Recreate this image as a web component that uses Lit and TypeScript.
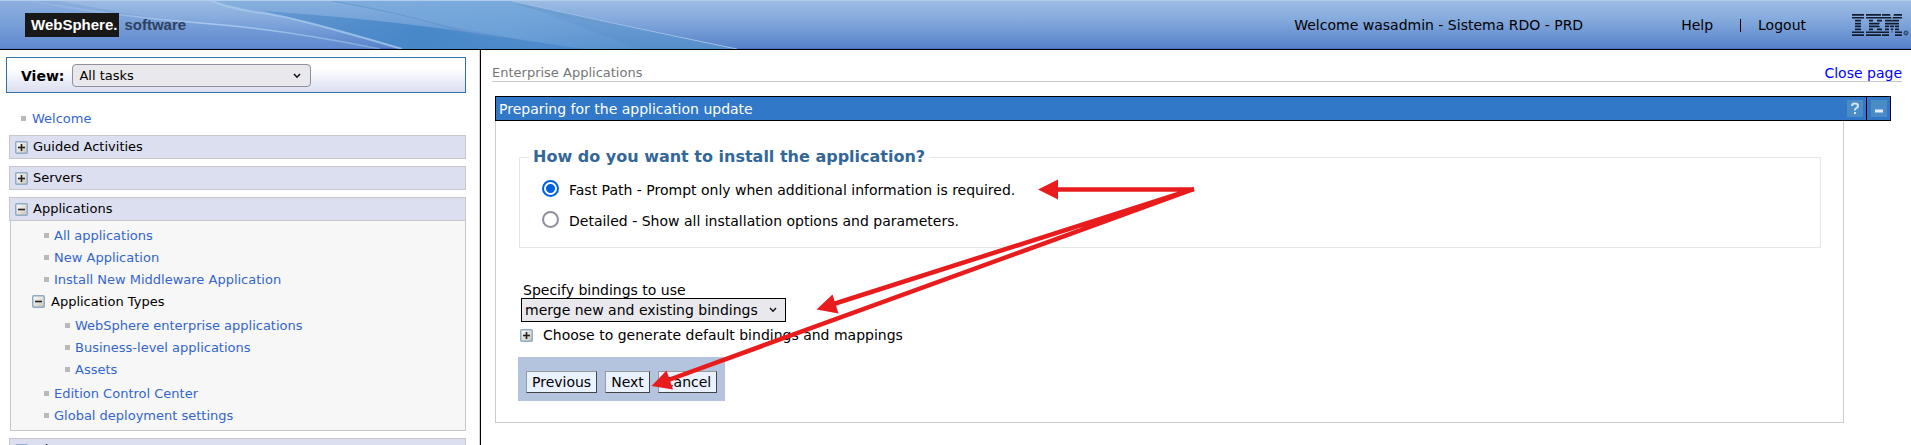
import { LitElement, html, css, svg } from "lit";
import { customElement, property } from "lit/decorators.js";

@customElement("toggle-icon")
class ToggleIcon extends LitElement {
  @property({ type: Boolean }) open = false;
  static styles = css`
    :host { display: block; width: 13px; height: 13px; flex: none; }
    .icon { display: block; }
  `;
  render() {
    return html`<svg class="icon" width="13" height="13" viewBox="0 0 13 13" aria-hidden="true">
      <defs><linearGradient id="face" x1="0" y1="0" x2="1" y2="1">
        <stop offset="0" stop-color="#fff" /><stop offset="1" stop-color="#c9c3b6" />
      </linearGradient></defs>
      <rect x="0.75" y="0.75" width="11.5" height="11.5" rx="1" fill="url(#face)" stroke="#8fadc6" stroke-width="1.5" />
      <path d="M3 6.5H10" stroke="#222" stroke-width="1.6" />
      ${this.open ? null : svg`<path d="M6.5 3V10" stroke="#222" stroke-width="1.6" />`}
    </svg>`;
  }
}

@customElement("app-banner")
class AppBanner extends LitElement {
  static styles = css`
    :host {
      display: flex; align-items: center; position: relative; overflow: hidden;
      box-sizing: border-box; height: 50px; padding: 0 2px 0 25px;
      border-top: 1px solid #b4cdea; border-bottom: 1px solid #000;
      background: linear-gradient(#9cbbe3, #83a9dc 40%, #5983cb 97%, #3a68bf);
      font-size: 14px; color: #000;
    }
    .art { position: absolute; left: 0; top: 0; }
    .brand { display: flex; align-items: center; position: relative; gap: 5px;
      font-family: "Liberation Sans Narrow", "Liberation Sans", sans-serif;
      font-size: 15px; font-weight: bold; line-height: 24px; color: #2e4260; }
    .mark { background: #181818; color: #fff; padding: 0 2px 0 6px; }
    .tools { display: flex; align-items: center; margin-left: auto; position: relative; }
    .user { margin-right: 98px; }
    .tools a { color: #000; text-decoration: none; }
    .bar { width: 1px; height: 13px; background: #000; margin: 0 17px 0 27px; }
    .ibm { margin-left: 46px; display: block; }
  `;
  render() {
    return html`
      <svg class="art" width="742" height="48" viewBox="0 0 742 48" aria-hidden="true">
        <defs>
          <linearGradient id="a" x1="0" y1="0" x2="0" y2="1"><stop offset="0" stop-color="#7fabdc" /><stop offset="1" stop-color="#5590cd" /></linearGradient>
          <linearGradient id="b" x1="0" y1="0" x2="1" y2="0"><stop offset="0" stop-color="#4a86c8" stop-opacity=".5" /><stop offset=".5" stop-color="#4486c7" /><stop offset="1" stop-color="#4b8acb" stop-opacity=".6" /></linearGradient>
          <linearGradient id="c" x1="0" y1="0" x2="1" y2="0"><stop offset="0" stop-color="#a9c8ee" stop-opacity=".2" /><stop offset=".5" stop-color="#a9c8ee" /><stop offset="1" stop-color="#a9c8ee" stop-opacity=".5" /></linearGradient>
          <linearGradient id="d" x1="0" y1="0" x2="1" y2="0"><stop offset="0" stop-color="#79aadb" /><stop offset=".6" stop-color="#6ea6da" /><stop offset="1" stop-color="#5f9ad3" stop-opacity=".5" /></linearGradient>
        </defs>
        <path d="M0 0H60Q150 18 200 22Q300 32 380 48H0Z" fill="#6f97d8" opacity=".35" />
        <path d="M213 0H512L737 48H402Q330 28 262 12Z" fill="url(#a)" opacity=".7" />
        <path d="M262 10Q380 18 480 33L585 48H402Q340 28 262 10Z" fill="url(#b)" opacity=".9" />
        <path d="M332 0H512L640 48H585Q500 36 460 27Q400 14 332 0Z" fill="url(#d)" opacity=".6" />
        <path d="M512 0L640 48H737Z" fill="#5792cc" opacity=".35" />
        <path d="M30 0Q120 16 200 22T380 48" fill="none" stroke="url(#c)" stroke-width="1.5" />
        <path d="M212 0Q230 8 262 12T402 48" fill="none" stroke="#a5c9eb" stroke-width="2" opacity=".8" />
        <path d="M332 0Q400 12 440 24T500 36" fill="none" stroke="#5a8fc4" opacity=".6" />
        <path d="M512 0Q620 24 737 48" fill="none" stroke="#9fc0e6" />
        <path d="M516 3Q560 14 620 26" fill="none" stroke="#6b94c4" opacity=".6" />
      </svg>
      <div class="brand"><span class="mark">WebSphere.</span><span>software</span></div>
      <div class="tools">
        <span class="user">Welcome wasadmin - Sistema RDO - PRD</span>
        <a href="#help">Help</a><span class="bar"></span><a href="#logout">Logout</a>
        <svg class="ibm" width="57" height="22" viewBox="0 0 57 22" role="img" aria-label="IBM">
          <g fill="#121c2e">
            <path d="M0 0h12v1.7H0zM14 0h15v1.7H14zM30 0h8l.6 1.7H30zM42 0h8v1.7H41.4z" />
            <path d="M0 2.9h12v1.7H0zM14 2.9h17v1.7H14zM30 2.9h9l.6 1.7H30zM41 2.9h9v1.7H40.4z" />
            <path d="M3 5.8h6v1.7H3zM17 5.8h4v1.7h-4zM25 5.8h5v1.7h-5zM33 5.8h6.6l.6 1.7H33zM40.4 5.8H47v1.7h-7.2z" />
            <path d="M3 8.7h6v1.7H3zM17 8.7h11l-1 1.7H17zM33 8.7h14v1.7H33z" />
            <path d="M3 11.6h6v1.7H3zM17 11.6h10l1 1.7H17zM33 11.6h4v1.7h-4zM37.5 11.6h5l-.6 1.7h-3.8zM43 11.6h4v1.7h-4z" />
            <path d="M3 14.5h6v1.7H3zM17 14.5h4v1.7h-4zM25 14.5h5v1.7h-5zM33 14.5h4v1.7h-4zM38.5 14.5h3l-.6 1.7h-1.8zM43 14.5h4v1.7h-4z" />
            <path d="M0 17.4h12v1.7H0zM14 17.4h16v1.7H14zM30 17.4h7v1.7h-7zM39.4 17.4h1.2L40 19zM43 17.4h7v1.7h-7z" />
            <path d="M0 20.2h12v1.7H0zM14 20.2h15v1.7H14zM30 20.2h7v1.7h-7zM43 20.2h7v1.7h-7z" />
          </g>
          <circle cx="54" cy="19" r="2" fill="none" stroke="#20324f" /><circle cx="54" cy="19" r=".7" fill="#20324f" />
        </svg>
      </div>`;
  }
}

@customElement("task-nav")
class TaskNav extends LitElement {
  static styles = css`
    :host { display: block; padding: 7px 13px 0 6px; font-size: 13px; color: #000; }
    .view { display: flex; align-items: center; gap: 8px; height: 33px; padding: 1px 0 0 14px; margin-bottom: 14px;
      border: 1px solid #336fa8; background: linear-gradient(#fff 30%, #dadff0); }
    .view label { font-size: 14px; font-weight: bold; }
    .pick { display: grid; width: 239px; align-items: center; }
    .pick > * { grid-area: 1 / 1; }
    .pick select { appearance: none; height: 23px; padding: 0 6px; border: 1px solid #8f8f9d; border-radius: 4px;
      background: #e9e9ed; color: #000; font: inherit; }
    .arrow { justify-self: end; margin-right: 10px; pointer-events: none; }
    .nav { padding-left: 3px; }
    .link { display: flex; align-items: center; gap: 5px; height: 22px; padding-left: 33px; }
    .link::before { content: ""; width: 5px; height: 5px; background: #b9b9b9; }
    .link a { color: #36c; text-decoration: none; }
    .top { padding: 0 0 6px 12px; gap: 6px; }
    .group { display: flex; align-items: center; gap: 5px; height: 22px; padding-left: 5px; margin-bottom: 7px;
      border: 1px solid #c6c6cc; background: #dcdff0; }
    .group span { padding-bottom: 1px; }
    .group.open { margin-bottom: 0; }
    .panel { margin: 0 0 7px 1px; padding: 3px 0 4px; border: 1px solid #c6c6c6; border-top: 0; background: #f7f7f7; }
    .sub { display: flex; align-items: center; gap: 6px; height: 23px; padding-left: 21px; }
    .deep { padding: 1px 0 2px 21px; }
  `;
  link(text: string, extra = "") {
    return html`<div class="link ${extra}"><a href="#task">${text}</a></div>`;
  }
  render() {
    return html`
      <div class="view">
        <label for="view">View:</label>
        <div class="pick">
          <select id="view"><option>All tasks</option></select>
          <svg class="arrow" width="8" height="6" viewBox="0 0 8 6"><path d="M1 1L4 4.2L7 1" fill="none" stroke="#111" stroke-width="1.6" /></svg>
        </div>
      </div>
      <nav class="nav">
        ${this.link("Welcome", "top")}
        <div class="group"><toggle-icon></toggle-icon><span>Guided Activities</span></div>
        <div class="group"><toggle-icon></toggle-icon><span>Servers</span></div>
        <div class="group open"><toggle-icon open></toggle-icon><span>Applications</span></div>
        <div class="panel">
          ${["All applications", "New Application", "Install New Middleware Application"].map((t) => this.link(t))}
          <div class="sub"><toggle-icon open></toggle-icon>Application Types</div>
          <div class="deep">
            ${["WebSphere enterprise applications", "Business-level applications", "Assets"].map((t) => this.link(t))}
          </div>
          ${["Edition Control Center", "Global deployment settings"].map((t) => this.link(t))}
        </div>
        <div class="group"><toggle-icon></toggle-icon><span>Jobs</span></div>
      </nav>`;
  }
}

@customElement("install-form")
class InstallForm extends LitElement {
  static styles = css`
    :host { display: block; padding: 14px 9px 0 11px; font-size: 14px; color: #000; }
    .crumbs { display: flex; align-items: center; justify-content: space-between; height: 17px;
      border-bottom: 1px solid #c8c8c8; color: #767676; font-size: 13px; }
    .crumbs a { color: #00f; text-decoration: none; font-size: 14px; }
    .portlet { margin: 14px 11px 0 3px; }
    .title { display: flex; align-items: stretch; height: 23px; border: 1px solid #000; background: #3178c9; color: #fff; }
    .title h1 { flex: 1; margin: 0; padding-left: 3px; font-size: 14px; line-height: 24px; font-weight: normal; }
    .title button { display: grid; place-items: center; width: 22px; padding: 0; border: 0; background: none; }
    .title button + button { width: 24px; border-left: 1px solid #000; }
    .body { margin-right: 47px; padding: 26px 22px 21px 22px; border: 1px solid #ccc; border-top: 0; }
    fieldset { margin: 0 0 34px 1px; padding: 8px 0 10px 18px; border: 1px solid #e6e6e6; }
    legend { margin-left: -9px; padding: 0 4px; font-size: 16px; line-height: 20px; font-weight: bold; color: #369; }
    .choice { display: flex; align-items: center; gap: 10px; height: 31px; }
    .choice label { padding-bottom: 2px; }
    .choice input { appearance: none; box-sizing: border-box; width: 17px; height: 17px; margin: 0 0 4px 4px;
      border: 2px solid #8f8f9d; border-radius: 50%; background: #fff; }
    .choice input:checked { border-color: #0060df; background: radial-gradient(#0060df 4px, #fff 5px); }
    .bind { display: block; padding-left: 5px; line-height: 16px; }
    .pick { display: inline-grid; align-items: center; margin-left: 3px; vertical-align: top; }
    .pick > * { grid-area: 1 / 1; }
    .pick select { appearance: none; box-sizing: border-box; width: 265px; height: 24px; padding: 0 3px; border: 1px solid #000; border-radius: 0;
      background: #e9e9ed; color: #000; font: inherit; }
    .arrow { justify-self: end; margin-right: 9px; pointer-events: none; }
    .more { display: flex; align-items: center; gap: 10px; height: 27px; padding-left: 2px; margin-bottom: 8px; }
    .more span { padding-bottom: 2px; }
    .actions { display: inline-flex; gap: 8px; padding: 14px 8px 8px; background: #b5c4de; vertical-align: top; }
    .actions button { height: 22px; padding: 0 5px; border: 1px solid; border-color: #999 #444 #444 #999; background: #ebf2ff; color: #000; font: inherit; }
  `;
  render() {
    return html`
      <div class="crumbs"><span>Enterprise Applications</span><a href="#close">Close page</a></div>
      <section class="portlet">
        <div class="title">
          <h1>Preparing for the application update</h1>
          <button aria-label="Help"><svg width="16" height="17" viewBox="0 0 16 17"><rect width="16" height="17" fill="#4c8cc6" /><path d="M5 6Q5 3.6 8 3.6T11 6Q11 7.4 9.3 8.2T8 10.6M8 12V14" fill="none" stroke="#d6e6f5" stroke-width="2" /></svg></button>
          <button aria-label="Minimize"><svg width="16" height="17" viewBox="0 0 16 17"><rect width="16" height="17" fill="#4c8cc6" /><path d="M4 11H12" stroke="#e4eefa" stroke-width="3" /></svg></button>
        </div>
        <form class="body">
          <fieldset>
            <legend>How do you want to install the application?</legend>
            <div class="choice"><input type="radio" name="path" id="fast" checked /><label for="fast">Fast Path - Prompt only when additional information is required.</label></div>
            <div class="choice"><input type="radio" name="path" id="detail" /><label for="detail">Detailed - Show all installation options and parameters.</label></div>
          </fieldset>
          <label class="bind" for="bindings">Specify bindings to use</label>
          <div class="pick">
            <select id="bindings"><option>merge new and existing bindings</option></select>
            <svg class="arrow" width="8" height="6" viewBox="0 0 8 6"><path d="M1 1L4 4.2L7 1" fill="none" stroke="#111" stroke-width="1.4" /></svg>
          </div>
          <div class="more"><toggle-icon></toggle-icon><span>Choose to generate default bindings and mappings</span></div>
          <div class="actions"><button type="button">Previous</button><button type="button">Next</button><button type="button">Cancel</button></div>
        </form>
      </section>`;
  }
}

@customElement("app-root")
class AppRoot extends LitElement {
  static styles = css`
    :host { display: grid; grid-template: auto minmax(0, 1fr) / 480px minmax(0, 1fr); position: relative;
      height: 100vh; overflow: hidden; background: #fff; font-family: Verdana, "DejaVu Sans", sans-serif; }
    .banner { grid-column: 1 / -1; }
    .nav { overflow: hidden; border-right: 1px solid #d0d0d0; }
    .main { overflow: hidden; border-left: 1px solid #000; }
    .marks { position: absolute; left: 640px; top: 170px; pointer-events: none; }
  `;
  render() {
    return html`
      <app-banner class="banner"></app-banner>
      <task-nav class="nav"></task-nav>
      <install-form class="main"></install-form>
      <svg class="marks" width="560" height="230" viewBox="640 170 560 230" aria-hidden="true">
        <g stroke="#e81c1c" stroke-width="4.5" fill="none">
          <path d="M1194 189.5H1055M1194 189L832 304.5M1194 189L667 380.5" />
        </g>
        <g fill="#e81c1c">
          <path d="M1038 189.5L1058 179.5V199.5Z" />
          <path d="M816.5 309.5L832.5 294.5L838.5 313.5Z" />
          <path d="M651.5 386L666.5 370.5L673 389.5Z" />
        </g>
      </svg>`;
  }
}
